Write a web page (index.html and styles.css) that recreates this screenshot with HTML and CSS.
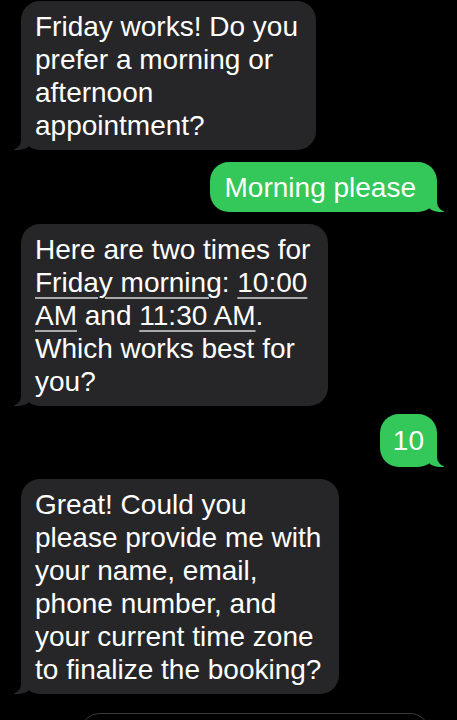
FILE: index.html
```html
<!DOCTYPE html>
<html lang="en">
<head>
  <meta charset="UTF-8" />
  <meta name="viewport" content="width=device-width, initial-scale=1" />
  <title>Messages</title>
  <link rel="stylesheet" href="styles.css">
</head>
<body>

  <div class="conversa">
    <div class="msg recebida">
      Friday works! Do you<br />prefer a morning or<br />afternoon<br />appointment?
    </div>

    <div class="msg enviada">Morning please</div>

    <div class="msg recebida">
      Here are two times for<br /><span class="link">Friday morning</span>: <span class="link">10:00<br />AM</span> and <span class="link">11:30 AM</span>.<br />Which works best for<br />you?
    </div>

    <div class="msg enviada curta">10</div>

    <div class="msg recebida">
      Great! Could you<br />please provide me with<br />your name, email,<br />phone number, and<br />your current time zone<br />to finalize the booking?
    </div>

    <div class="campo-texto"></div>
  </div>

</body>
</html>
```

FILE: styles.css
```css
* {
  box-sizing: border-box;
  margin: 0;
  padding: 0;
}

html, body {
  background: #000;
  font-family: "Liberation Sans", Arial, sans-serif;
  overflow: hidden;
}

.conversa {
  display: flex;
  flex-direction: column;
  padding: 1px 20px 0 21px;
}

.msg {
  position: relative;
  width: fit-content;
  font-size: 28px;
  line-height: 33px;
  color: #fff;
  border-radius: 19px;
  padding: 9px 18px 8px 14px;
}

.recebida {
  background: #262628;
  align-self: flex-start;
}

.enviada {
  background: #34c759;
  align-self: flex-end;
  padding: 9px 21px 8px 15px;
}

.curta {
  padding: 10px 13px 10px 13px;
}

/* cauda do balao */
.msg::before,
.msg::after {
  content: "";
  position: absolute;
  bottom: 0;
  height: 20px;
}

.recebida::before {
  left: -7px;
  width: 20px;
  background: #262628;
  border-bottom-right-radius: 15px;
}

.recebida::after {
  left: -10px;
  width: 10px;
  background: #000;
  border-bottom-right-radius: 10px;
}

.enviada::before {
  right: -7px;
  width: 20px;
  background: #34c759;
  border-bottom-left-radius: 15px;
}

.enviada::after {
  right: -10px;
  width: 10px;
  background: #000;
  border-bottom-left-radius: 10px;
}

.msg + .msg {
  margin-top: 12px;
}

.enviada:first-of-type {
  margin-top: 13px;
}

.curta {
  margin-top: 8px !important;
}

.link {
  text-decoration: underline;
  text-decoration-color: #a9a9ab;
  text-decoration-thickness: 2px;
  text-underline-offset: 5px;
}

.campo-texto {
  margin: 19px 7px 0 59px;
  height: 44px;
  border: 1.5px solid #3a3a3c;
  border-radius: 20px;
}
```
